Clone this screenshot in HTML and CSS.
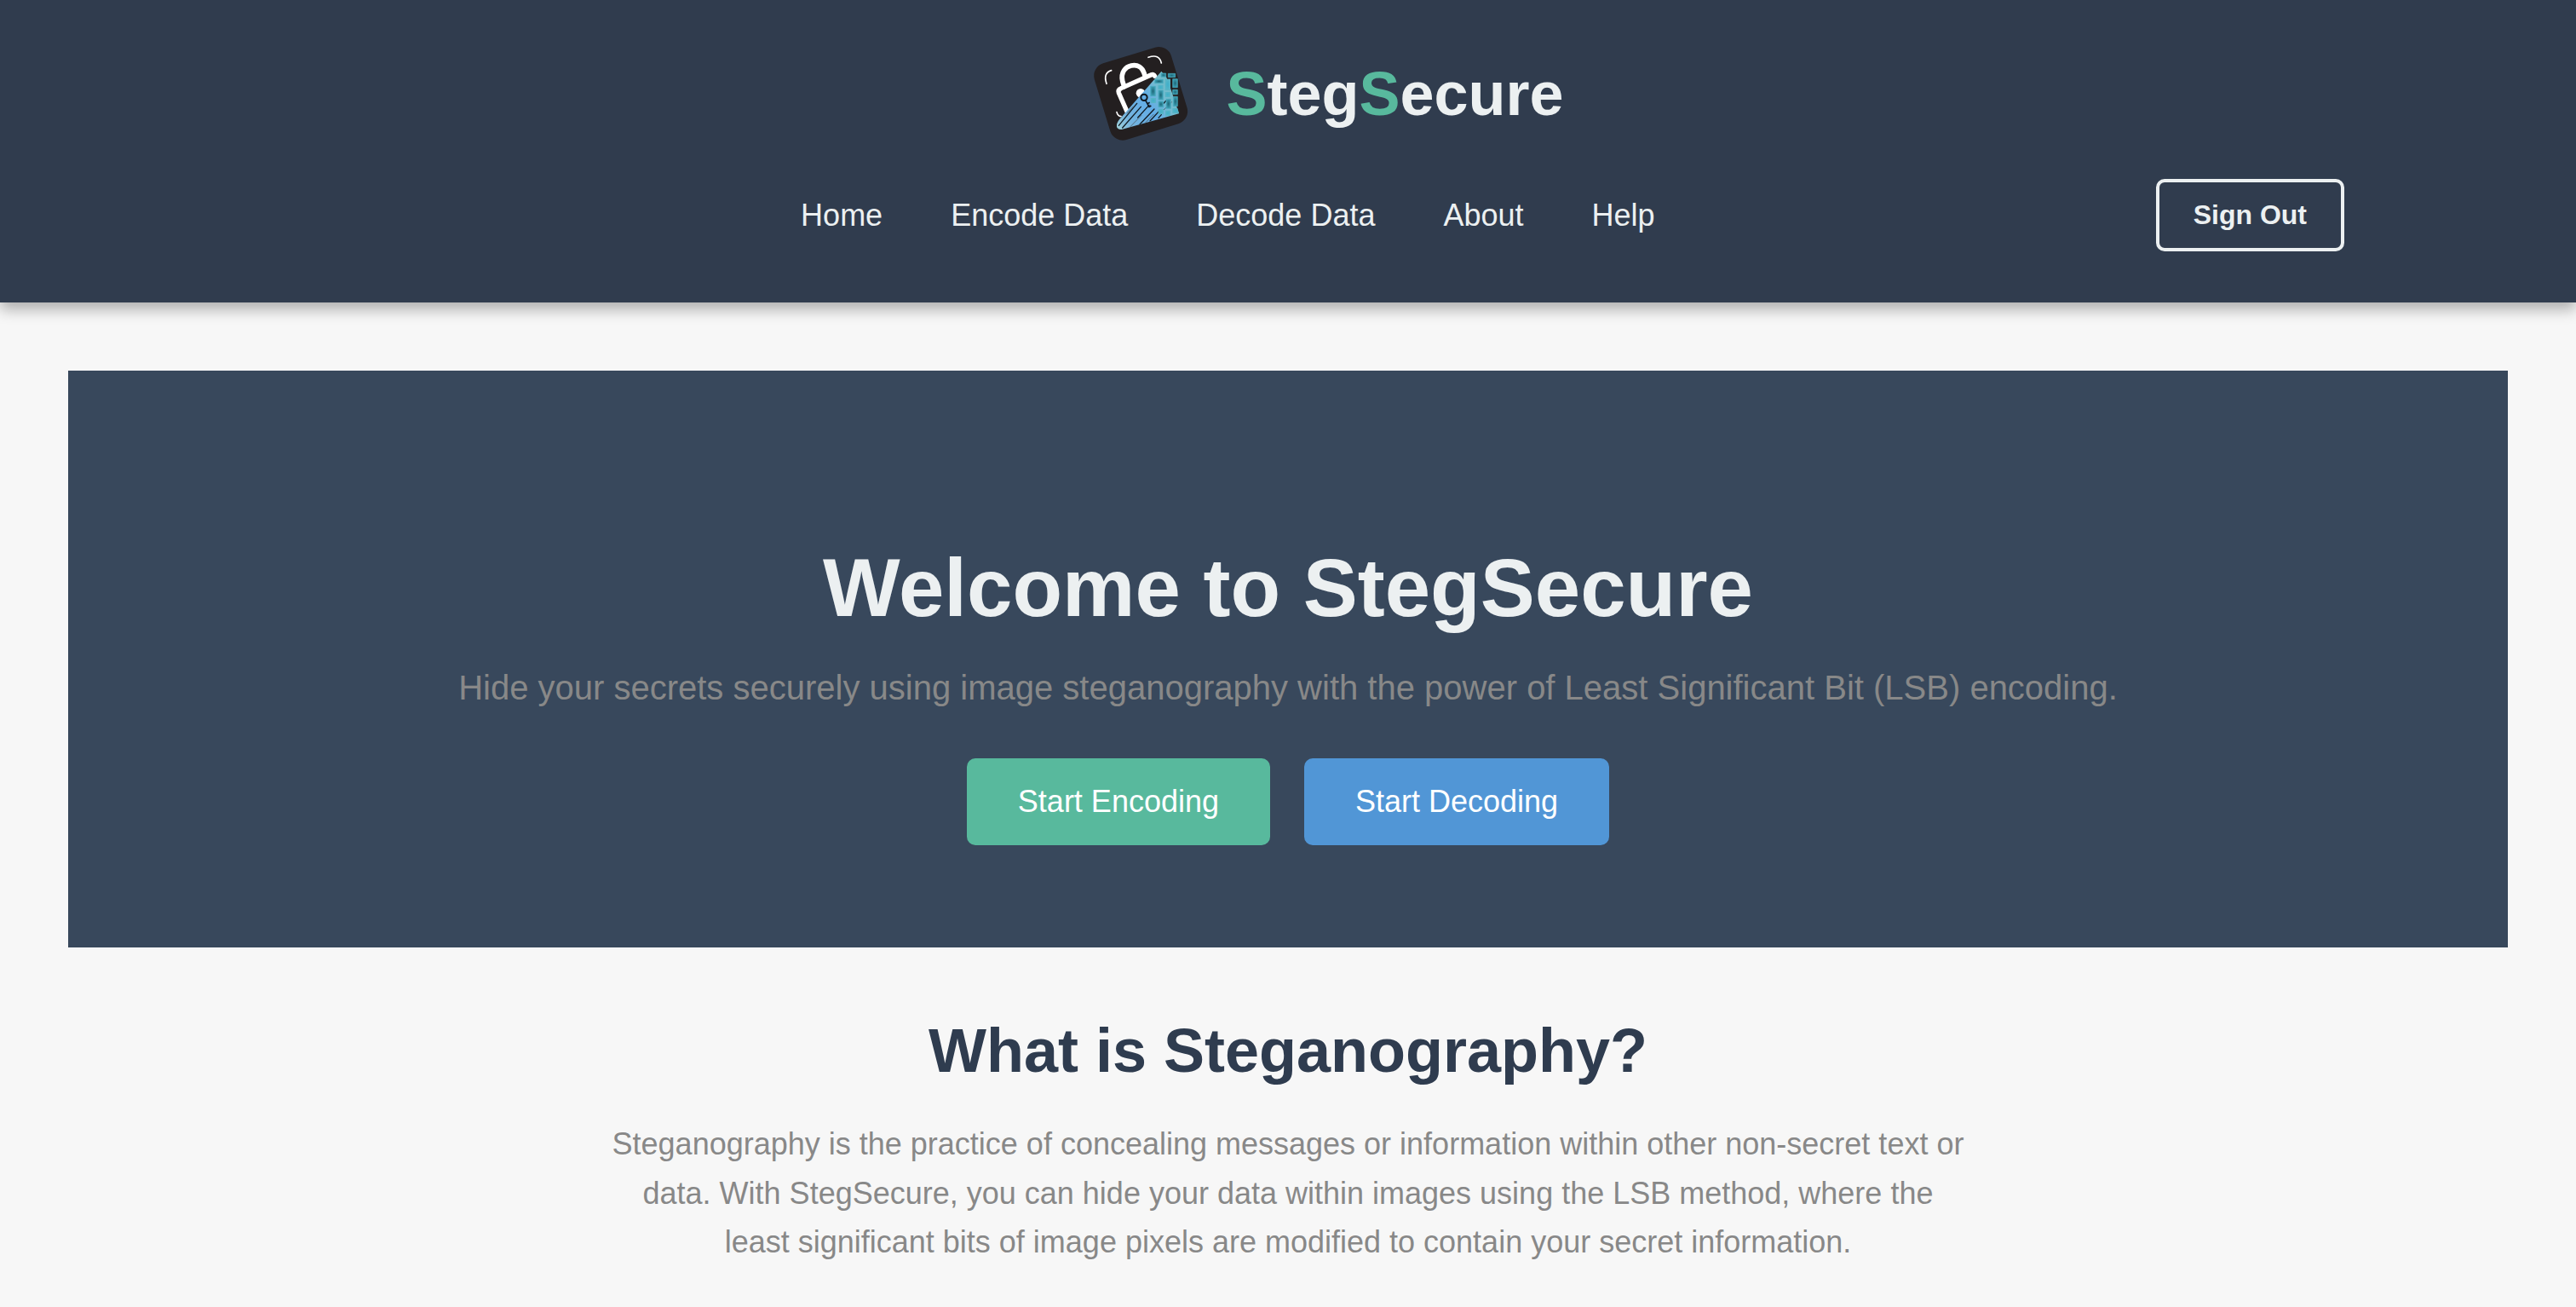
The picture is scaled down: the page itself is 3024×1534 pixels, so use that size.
FILE: index.html
```html
<!DOCTYPE html>
<html lang="en">
<head>
<meta charset="utf-8">
<title>StegSecure</title>
<link rel="stylesheet" href="styles.css">
</head>
<body>
<header class="header">
  <div class="brand">
    <svg class="brand-logo" viewBox="27 30 360 360" aria-hidden="true">
      <defs>
        <linearGradient id="beam" gradientUnits="userSpaceOnUse" x1="125" y1="325" x2="335" y2="200">
          <stop offset="0" stop-color="#9accd8"/>
          <stop offset=".2" stop-color="#74b4e0"/>
          <stop offset=".55" stop-color="#62ace6"/>
          <stop offset=".8" stop-color="#74bcd0"/>
          <stop offset="1" stop-color="#6fb9c4"/>
        </linearGradient>
        <radialGradient id="tile">
          <stop offset="0" stop-color="#1f6878"/>
          <stop offset="1" stop-color="#3b9db2"/>
        </radialGradient>
        <radialGradient id="tile-light">
          <stop offset="0" stop-color="#3fb0ca"/>
          <stop offset="1" stop-color="#58b4c6"/>
        </radialGradient>
        <clipPath id="beam-clip">
          <path d="M280 131L298 152L316 202L342 280L140 336Q120 336 123 318Q126 306 140 292Z"/>
        </clipPath>
      </defs>
      <rect x="66" y="69" width="283" height="281" rx="46" fill="#231f20" transform="rotate(-17 207.500 209.500)"/>
      <g fill="none" stroke="#fff" stroke-linecap="round">
        <path d="M87 175Q74 137 104 128M234 82Q273 68 280 102M123 275Q126 289 138 290" stroke-width="5"/>
        <path d="M149 185L143 165C136 133 155 115 174 111C197 106 213 118 219 137L223 150" stroke-width="17"/>
        <path d="M161 277L130 207Q126 196 138 191L243 144Q253 139 257 148" stroke-width="16"/>
      </g>
      <circle cx="207" cy="208" r="16" fill="#fff"/>
      <path d="M280 131L298 152L316 202L342 280L140 336Q120 336 123 318Q126 306 140 292Z" fill="url(#beam)"/>
      <g clip-path="url(#beam-clip)" fill="none" stroke="#121c24" stroke-width="4" stroke-linecap="round">
        <path d="M130 322L194 244M143 330L208 256M197 294L237 250M204 318L255 264M240 306L275 268M270 295L280 284M289 243L296 235"/>
        <path stroke="#556c7c" stroke-width="3" d="M159 279L181 255M166 331L210 286M221 315L252 283M287 268L317 239"/>
      </g>
      <g fill="url(#tile)" stroke="#48aabd" stroke-width="2">
        <path d="M279 138H296V151H279Z"/>
        <path d="M304 139H329V152H304Z"/>
        <path d="M257 160H286V173H257Z"/>
        <path d="M320 158H337V188H320Z"/>
        <path d="M242 184H259V218H242Z"/>
        <path d="M320 196H337V212H320Z"/>
        <path d="M270 198H286V231H270Z"/>
        <path d="M322 220H337V254H322Z"/>
        <path d="M297 229H313V262H297Z"/>
        <path d="M270 237H287V257H270Z"/>
      </g>
      <g fill="url(#tile-light)">
        <path d="M293 158H312V198H293Z"/>
        <path d="M268 179H287V195H268Z"/>
        <path d="M293 204H312V222H293Z"/>
        <path d="M242 225H261V243H242Z"/>
        <path d="M269 263H288V282H269Z"/>
        <path d="M294 269H312V288H294Z"/>
        <path d="M319 261H337L342 279H319Z"/>
      </g>
      <g fill="none" stroke="#101820">
        <circle cx="219" cy="223" r="11" stroke-width="6"/>
        <path d="M224 233L238 258M231 245L239 241M237 257L244 252" stroke-width="5"/>
      </g>
    </svg>
    <div class="brand-name"><span>S</span>teg<span>S</span>ecure</div>
  </div>
  <div class="nav-row">
    <nav class="nav">
      <a>Home</a>
      <a>Encode Data</a>
      <a>Decode Data</a>
      <a>About</a>
      <a>Help</a>
    </nav>
    <button class="sign-out">Sign Out</button>
  </div>
</header>
<main class="main">
  <section class="hero">
    <h1>Welcome to StegSecure</h1>
    <p>Hide your secrets securely using image steganography with the power of Least Significant Bit (LSB) encoding.</p>
    <div class="actions">
      <a class="btn btn-encode">Start Encoding</a>
      <a class="btn btn-decode">Start Decoding</a>
    </div>
  </section>
  <section class="about">
    <h2>What is Steganography?</h2>
    <p>Steganography is the practice of concealing messages or information within other non-secret text or data. With StegSecure, you can hide your data within images using the LSB method, where the least significant bits of image pixels are modified to contain your secret information.</p>
  </section>
</main>
</body>
</html>
```
FILE: styles.css
```css
* {
  box-sizing: border-box;
  margin: 0;
  padding: 0;
}

body {
  background: #f7f7f7;
  color: #888;
  font-family: "Liberation Sans", Arial, sans-serif;
}

.header {
  display: flex;
  flex-direction: column;
  gap: 40px;
  padding: 50px 0 60px;
  background: #303c4e;
  color: #ecf0f1;
  box-shadow: 0 8px 16px rgba(0, 0, 0, 0.3);
}

.brand {
  display: flex;
  align-items: center;
  justify-content: center;
  gap: 40px;
  height: 120px;
  padding-left: 91px;
}

.brand-logo {
  width: 120px;
  height: 120px;
}

.brand-name {
  font-size: 72px;
  font-weight: bold;
  line-height: 82px;
}

.brand-name span {
  color: #58b99d;
}

.nav-row {
  display: flex;
  align-items: center;
  height: 85px;
  padding: 0 272px 0 352px;
}

.nav {
  display: flex;
  flex: 1;
  justify-content: center;
  gap: 80px;
  font-size: 36px;
  line-height: 41px;
}

.sign-out {
  height: 85px;
  padding: 0 40px;
  border: 4px solid #ecf0f1;
  border-radius: 10px;
  background: transparent;
  color: #ecf0f1;
  font: bold 32px "Liberation Sans", Arial, sans-serif;
}

.main {
  padding: 80px 80px 0;
}

.hero {
  padding: 200px 0 120px;
  background: #38485c;
  text-align: center;
}

.hero h1 {
  margin-bottom: 30px;
  color: #ecf0f1;
  font-size: 96px;
  line-height: 110px;
}

.hero p {
  margin-bottom: 51px;
  font-size: 40px;
  line-height: 64px;
}

.actions {
  display: flex;
  justify-content: center;
  gap: 40px;
}

.btn {
  height: 102px;
  padding: 0 60px;
  border-radius: 10px;
  color: #fff;
  font-size: 36px;
  line-height: 102px;
}

.btn-encode {
  background: #58b99d;
}

.btn-decode {
  background: #5196d6;
}

.about {
  max-width: 1600px;
  margin: 80px auto 0;
  text-align: center;
}

.about h2 {
  margin-bottom: 40px;
  color: #2f3c4f;
  font-size: 72px;
  line-height: 82px;
}

.about p {
  font-size: 36px;
  line-height: 57.6px;
}
```
